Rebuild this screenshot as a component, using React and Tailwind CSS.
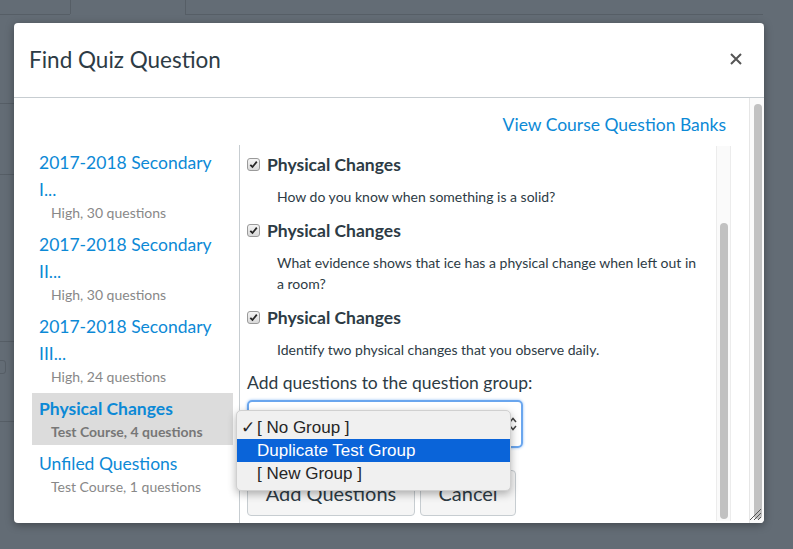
import React from "react";

const banks = [
  { title: "2017-2018 Secondary I...", sub: "High, 30 questions" },
  { title: "2017-2018 Secondary II...", sub: "High, 30 questions" },
  { title: "2017-2018 Secondary III...", sub: "High, 24 questions" },
  { title: "Physical Changes", sub: "Test Course, 4 questions", active: true },
  { title: "Unfiled Questions", sub: "Test Course, 1 questions" },
];

const questions = [
  { title: "Physical Changes", text: "How do you know when something is a solid?" },
  {
    title: "Physical Changes",
    text: "What evidence shows that ice has a physical change when left out in a room?",
  },
  { title: "Physical Changes", text: "Identify two physical changes that you observe daily." },
];

function Checkbox() {
  return (
    <span className="w-[13px] h-[13px] rounded-[3px] border border-[#9a9a9a] bg-gradient-to-b from-[#f4f4f4] to-[#d9d9d9] flex items-center justify-center shrink-0">
      <svg width="9" height="9" viewBox="0 0 9 9">
        <path d="M1.3 4.8 L3.5 7 L7.8 1.6" fill="none" stroke="#262626" strokeWidth="1.8" />
      </svg>
    </span>
  );
}

function Scrollbar({ thumbTop, className }) {
  return (
    <div className={"w-[15px] bg-[#fafafa] border-l border-r border-[#ececec] relative " + className}>
      <div
        className="absolute left-[3px] right-[2px] bottom-[2px] rounded-full bg-[#c1c1c1]"
        style={{ top: thumbTop }}
      />
    </div>
  );
}

export default function App() {
  return (
    <div className="relative w-[793px] h-[549px] overflow-hidden bg-[#636c75] font-['Lato',sans-serif]">
      {/* page behind the overlay */}
      <div className="absolute left-0 top-[14px] w-[70px] border-t border-[#565e66]" />
      <div className="absolute left-[185px] top-[14px] w-[578px] border-t border-[#565e66]" />
      <div className="absolute left-[70px] top-0 h-[14px] border-l border-[#565e66]" />
      <div className="absolute left-[185px] top-0 h-[14px] border-l border-[#565e66]" />
      <div className="absolute left-0 top-[103px] w-[14px] border-t border-[#565e66]" />
      <div className="absolute left-0 top-[174px] w-[14px] border-t border-[#565e66]" />
      <div className="absolute left-0 top-[341px] w-[14px] border-t border-[#565e66]" />
      <div className="absolute left-0 top-[421px] w-[14px] border-t border-[#565e66]" />
      <div className="absolute left-[-6px] top-[360px] w-[12px] h-[14px] rounded-[3px] border border-[#565e66]" />

      {/* modal */}
      <div className="absolute left-[14px] top-[23px] w-[750px] h-[500px] bg-white rounded-[4px] shadow-[0_2px_8px_rgba(0,0,0,0.35)] flex flex-col overflow-hidden">
        <div className="h-[75px] shrink-0 border-b border-[#c7cdd1] flex items-center justify-between pl-[15px] pr-[22px]">
          <h1 className="text-[22.5px] leading-[28px] -mt-[1px] text-[#2d3b45]">Find Quiz Question</h1>
          <svg width="12" height="12" viewBox="0 0 12 12" className="-mt-[2px]">
            <path d="M1 1 L11 11 M11 1 L1 11" stroke="#555" strokeWidth="2" />
          </svg>
        </div>

        <div className="flex-1 flex min-h-0">
          <div className="flex-1 flex flex-col pl-[18px] min-w-0">
            <div className="pt-[13px] pr-[23px] text-right leading-[27px] text-[17.5px] text-[#0c89d6]">
              View Course Question Banks
            </div>

            <div className="mt-[7px] flex-1 flex min-h-0">
              {/* banks */}
              <div className="w-[208px] border-r border-[#c7cdd1] pt-[2px] flex flex-col gap-[3px]">
                {banks.map((b, i) => (
                  <div
                    key={i}
                    className={
                      "mr-[6px] pl-[7px] pt-[2px] pb-[4px] " + (b.active ? "bg-[#dcdcdc]" : "")
                    }
                  >
                    <div
                      className={
                        "text-[17.5px] leading-[27px] text-[#0c89d6] w-[185px] " +
                        (b.active ? "font-bold" : "")
                      }
                    >
                      {b.title}
                    </div>
                    <div
                      className={
                        "pl-[12px] text-[14px] leading-[19px] " +
                        (b.active ? "font-bold text-[#777]" : "text-[#888]")
                      }
                    >
                      {b.sub}
                    </div>
                  </div>
                ))}
              </div>

              {/* questions */}
              <div className="flex-1 flex pr-[18px] min-w-0">
                <div className="flex-1 pl-[7px] pt-[6px] pr-[14px] text-[#2d3b45] min-w-0">
                  {questions.map((q, i) => (
                    <div key={i} className="mb-[10px]">
                      <div className="flex items-center gap-[7px] leading-[27px]">
                        <Checkbox />
                        <span className="text-[17.5px] font-bold">{q.title}</span>
                      </div>
                      <p className="mt-[8px] pl-[30px] text-[14px] leading-[21px]">{q.text}</p>
                    </div>
                  ))}
                  <div className="-mt-[1px] text-[17.5px] leading-[27px]">
                    Add questions to the question group:
                  </div>
                  <div className="mt-[4px] w-[276px] h-[48px] rounded-[5px] border-2 border-[#6aa6ee] shadow-[0_0_3px_#8fbdf5] flex items-center justify-end pr-[4px]">
                    <svg width="8" height="14" viewBox="0 0 8 14">
                      <path d="M1 5 L4 1.5 L7 5 M1 9 L4 12.5 L7 9" fill="none" stroke="#444" strokeWidth="1.5" />
                    </svg>
                  </div>
                  <div className="mt-[22px] flex gap-[5px]">
                    <button className="w-[168px] h-[46px] rounded-[4px] border border-[#c7cdd1] bg-[#f5f5f5] text-[20px] text-[#2d3b45]">
                      Add Questions
                    </button>
                    <button className="w-[96px] h-[46px] rounded-[4px] border border-[#c7cdd1] bg-[#f5f5f5] text-[20px] text-[#2d3b45]">
                      Cancel
                    </button>
                  </div>
                </div>
                <Scrollbar thumbTop={77} className="mt-[1px] mb-[2px]" />
              </div>
            </div>
          </div>

          <div className="w-[15px] border-l border-[#e6e6e6] bg-[#fafafa] relative">
            <div className="absolute left-[4px] w-[8px] top-[6px] bottom-[4px] rounded-full bg-[#c1c1c1]" />
            <svg className="absolute right-[2px] bottom-[2px]" width="14" height="14" viewBox="0 0 14 14">
              <path d="M2 13 L13 2 M6 13 L13 6 M10 13 L13 10" stroke="#555" strokeWidth="1" />
            </svg>
          </div>
        </div>
      </div>

      {/* open select menu */}
      <div className="absolute left-[236px] top-[410px] w-[275px] py-[5px] rounded-[5px] bg-[#f0f0f0] border border-[#d0d0d0] shadow-[0_3px_8px_rgba(0,0,0,0.3)] font-['Liberation_Sans',sans-serif] text-[17px] text-[#262626]">
        <div className="relative h-[23px] leading-[23px] pl-[20px]">
          <span className="absolute left-[4px]">✓</span>[ No Group ]
        </div>
        <div className="h-[23px] leading-[23px] pl-[20px] bg-[#0a64d9] text-white">Duplicate Test Group</div>
        <div className="h-[23px] leading-[23px] pl-[20px]">[ New Group ]</div>
      </div>
    </div>
  );
}
